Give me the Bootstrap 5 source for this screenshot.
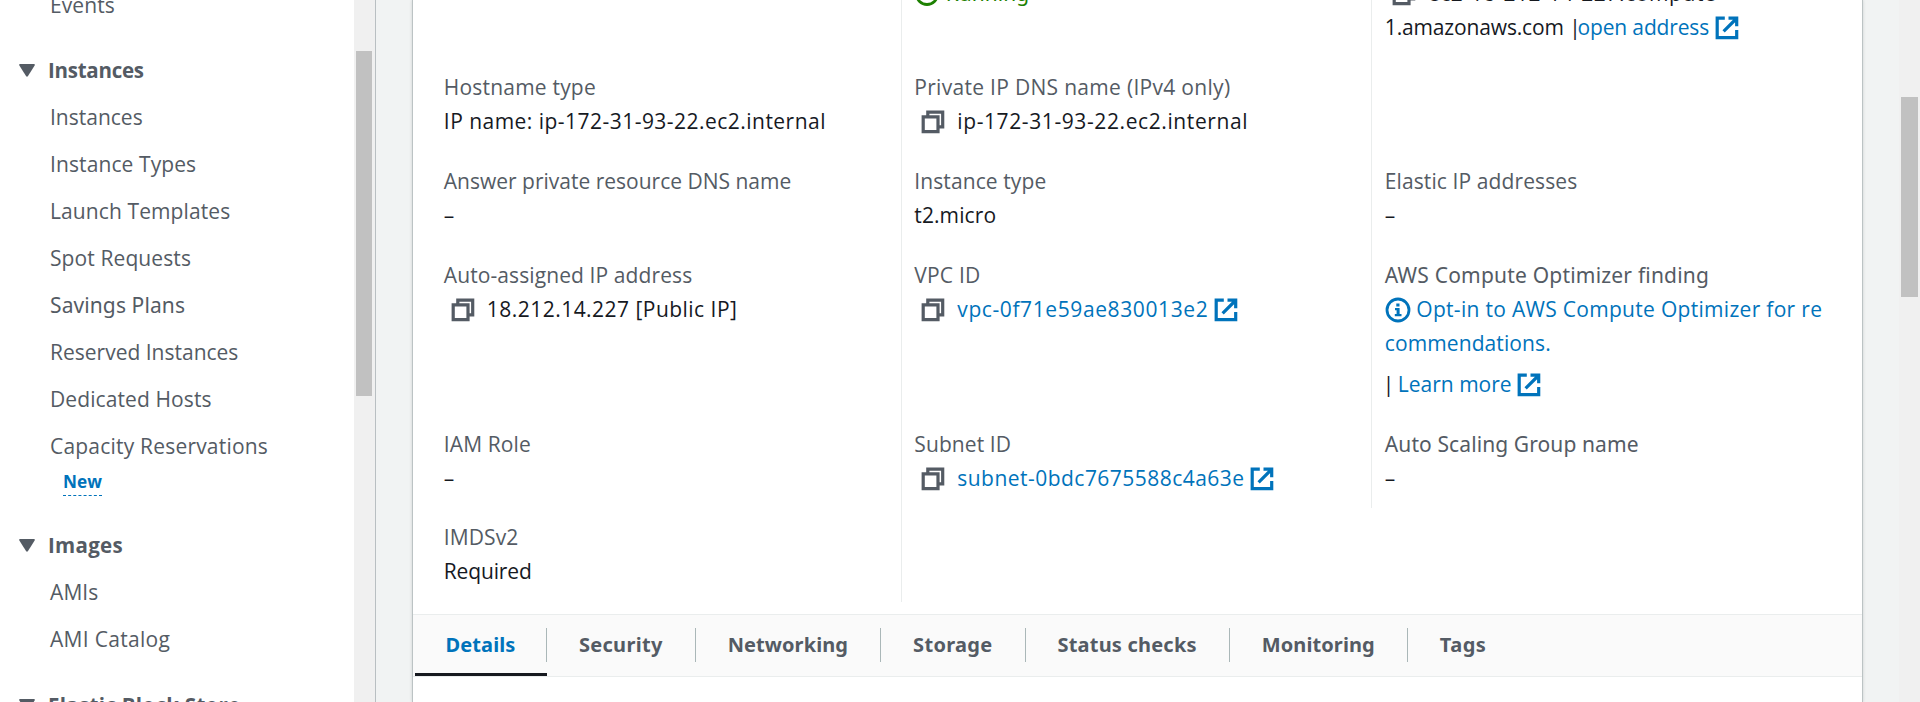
<!DOCTYPE html>
<html lang="en">
<head>
<meta charset="utf-8">
<title>Instance summary</title>
<link href="https://cdn.jsdelivr.net/npm/bootstrap@5.3.0/dist/css/bootstrap.min.css" rel="stylesheet">
<style>
  body { font: 21px/34px "Open Sans", sans-serif; letter-spacing: .1px; color: #16191f; background: #f1f3f3; }
  a, a:hover { color: #0073bb; text-decoration: none; }
  svg { fill: none; }
  .noto { font-family: "Noto Sans", sans-serif; }
  .ls-n2 { letter-spacing: -.15px; }
  .ls-0 { letter-spacing: 0; }
  .ls-2 { letter-spacing: .2px; }
  .ls-3 { letter-spacing: .3px; }
  .ls-5 { letter-spacing: .47px; }
  .ls-6 { letter-spacing: .6px; }

  /* Side navigation */
  .side-nav { width: 354px; padding-left: 50px; }
  .side-nav .nav-link { padding: 0; line-height: 47px; color: #545b64; white-space: nowrap; }
  .side-nav .group { margin-top: 18.5px; }
  .side-nav .first { margin-top: -18.5px; }
  .side-nav .heading { margin-left: -31px; font-size: 20.5px; font-weight: 700; line-height: 47px; color: #545b64; letter-spacing: -.25px; white-space: nowrap; }
  .side-nav .heading.spaced { letter-spacing: .3px; }
  .heading svg { width: 16px; height: 13px; margin-right: 13px; fill: #545b64; }
  .new-row { height: 40px; margin-top: -7px; line-height: 35px; padding-left: 13px; }
  .new-row a { font-size: 17.2px; font-weight: 700; padding-bottom: 2px; border-bottom: 1px dashed #0073bb; }
  .after-images { margin-top: .5px; }
  .rail { background: #f0f0f0; }
  .rail div { background: #c1c1c1; }
  .rail-side { width: 22px; padding: 51px 3px 0 2px; border-right: 1px solid #b9bfc2; }
  .rail-side div { height: 345px; }
  .rail-page { width: 21px; padding: 97px 2px 0; }
  .rail-page div { height: 200px; }

  /* Instance summary */
  .panel { margin: 0 36px; background: #fff; border: solid #bcc3c4; border-width: 0 1px; box-shadow: 0 0 3px rgba(0, 28, 36, .15); }
  .summary { display: grid; grid-template-columns: repeat(3, 470.5px); grid-template-rows: 82px 93.5px 94px 169px 93.5px 94px; margin: -24px 0 0 17px; height: 638px; align-content: start; }
  .field { padding: 12px 0 0 12.8px; border-left: 1px solid #eaeded; white-space: nowrap; }
  .field:nth-child(3n+1), .blank { border-color: transparent; }
  .top-row { padding-top: 0; }
  .caption { color: #545b64; }
  .ic { width: 24px; height: 24px; vertical-align: -5px; stroke-width: 3.2; }
  .ic-copy { stroke: #545b64; margin: 0 12px 0 7px; }
  .ic-ext { stroke: #0073bb; margin-left: 5.5px; }
  .ic-round { width: 26px; height: 26px; vertical-align: -6px; margin-right: 5.5px; }
  .bar { margin-right: -3px; }
  .lead-bar { margin: 0 -2px 0 -2px; }
  .running { color: #1d8102; }

  /* Tabs */
  .tab-bar { height: 63px; background: #fafafa; border: solid #eaeded; border-width: 1px 0; padding-left: 2px; }
  .tab-bar .nav-item { padding: 13px 0; }
  .tab-bar .nav-link { padding: 0 32px; font: 700 20px/34px "Noto Sans", sans-serif; color: #545b64; border-right: 1px solid #aab7b8; }
  .tab-bar .nav-item:last-child .nav-link { border: 0; }
  .tab-bar .current { border-bottom: 3px solid #16191f; }
  .tab-bar .current .nav-link { color: #0073bb; padding: 0 30.5px; }
</style>
</head>
<body class="vh-100 overflow-hidden">
<svg class="d-none">
  <symbol id="copy" viewBox="0 0 24 24"><path d="M2.2 6.9H17V21.6H2.2ZM6.8 6.9V2.2H21.7V16.9H17"/></symbol>
  <symbol id="ext" viewBox="0 0 24 24"><path d="M9.8 2.2H2.2V21.6H21.7V14M13.5 2.2H21.7V10.2M8.6 15.4 21 3"/></symbol>
  <symbol id="caret" viewBox="0 0 16 13"><path d="M1 0H15Q16.400 .2 15.500 1.700L9 12Q8 13.400 7 12L.5 1.700Q-.4 .2 1 0Z"/></symbol>
</svg>
<div class="d-flex vh-100">
  <aside class="side-nav bg-white flex-shrink-0">
    <nav class="nav flex-column flex-nowrap">
      <a class="nav-link first" href="#">Events</a>
      <div class="heading group d-flex align-items-center"><svg><use href="#caret"/></svg>Instances</div>
      <a class="nav-link ls-0" href="#">Instances</a>
      <a class="nav-link" href="#">Instance Types</a>
      <a class="nav-link" href="#">Launch Templates</a>
      <a class="nav-link" href="#">Spot Requests</a>
      <a class="nav-link noto" href="#">Savings Plans</a>
      <a class="nav-link ls-0" href="#">Reserved Instances</a>
      <a class="nav-link" href="#">Dedicated Hosts</a>
      <a class="nav-link ls-2" href="#">Capacity Reservations</a>
      <div class="new-row"><a href="#">New</a></div>
      <div class="heading spaced group d-flex align-items-center"><svg><use href="#caret"/></svg>Images</div>
      <a class="nav-link after-images" href="#">AMIs</a>
      <a class="nav-link ls-3" href="#">AMI Catalog</a>
      <div class="heading spaced group d-flex align-items-center"><svg><use href="#caret"/></svg>Elastic Block Store</div>
    </nav>
  </aside>
  <div class="rail rail-side flex-shrink-0"><div></div></div>

  <main class="panel flex-grow-1">
    <section class="summary">
      <div class="field top-row"></div>
      <div class="field top-row running"><svg class="ic-round" viewBox="0 0 26 26" stroke="#1d8102" stroke-width="2.8"><circle cx="13" cy="13" r="10.500"/><path d="m8 13 4 4 6-7"/></svg><span class="noto ls-0">Running</span></div>
      <div class="field top-row"><svg class="ic ic-copy"><use href="#copy"/></svg><span class="ls-6">ec2-18-212-14-227.compute-</span><br><span class="ls-n2">1.amazonaws.com <span class="bar">|</span><a href="#">open address</a></span><svg class="ic ic-ext"><use href="#ext"/></svg></div>

      <div class="field"><div class="caption ls-2">Hostname type</div><div class="ls-5">IP name: ip-172-31-93-22.ec2.internal</div></div>
      <div class="field"><div class="caption ls-3">Private IP DNS name (IPv4 only)</div><div class="ls-6"><svg class="ic ic-copy"><use href="#copy"/></svg>ip-172-31-93-22.ec2.internal</div></div>
      <div class="field"></div>

      <div class="field"><div class="caption ls-0">Answer private resource DNS name</div><div>–</div></div>
      <div class="field"><div class="caption">Instance type</div><div>t2.micro</div></div>
      <div class="field"><div class="caption">Elastic IP addresses</div><div>–</div></div>

      <div class="field"><div class="caption">Auto-assigned IP address</div><div class="ls-5"><svg class="ic ic-copy"><use href="#copy"/></svg>18.212.14.227 [Public IP]</div></div>
      <div class="field"><div class="caption ls-2">VPC ID</div><div class="ls-6"><svg class="ic ic-copy"><use href="#copy"/></svg><a href="#">vpc-0f71e59ae830013e2</a><svg class="ic ic-ext"><use href="#ext"/></svg></div></div>
      <div class="field"><div class="caption noto ls-2">AWS Compute Optimizer finding</div><div><a href="#"><svg class="ic-round" viewBox="0 0 26 26"><circle cx="13" cy="13" r="11" stroke="#0073bb" stroke-width="2.8"/><path fill="#0073bb" d="M11.300 6.500h3.200v3h-3.200zM10 11h4.600v6H16.500v2.200H9.800V17h1.800v-3.800H10z"/></svg><span class="ls-3">Opt-in to AWS Compute Optimizer for re</span><br>commendations.</a></div><div class="ls-0" style="margin-top: 7px"><span class="lead-bar">|</span> <a href="#">Learn more</a><svg class="ic ic-ext"><use href="#ext"/></svg></div></div>

      <div class="field"><div class="caption">IAM Role</div><div>–</div></div>
      <div class="field"><div class="caption">Subnet ID</div><div class="ls-5"><svg class="ic ic-copy"><use href="#copy"/></svg><a href="#">subnet-0bdc7675588c4a63e</a><svg class="ic ic-ext"><use href="#ext"/></svg></div></div>
      <div class="field"><div class="caption noto">Auto Scaling Group name</div><div>–</div></div>

      <div class="field"><div class="caption">IMDSv2</div><div class="ls-n2">Required</div></div>
      <div class="field"></div>
      <div class="field blank"></div>
    </section>
    <ul class="nav tab-bar flex-nowrap">
      <li class="nav-item current"><a class="nav-link" href="#">Details</a></li>
      <li class="nav-item"><a class="nav-link ls-3" href="#">Security</a></li>
      <li class="nav-item"><a class="nav-link" href="#">Networking</a></li>
      <li class="nav-item"><a class="nav-link ls-3" href="#">Storage</a></li>
      <li class="nav-item"><a class="nav-link ls-2" href="#">Status checks</a></li>
      <li class="nav-item"><a class="nav-link" href="#">Monitoring</a></li>
      <li class="nav-item"><a class="nav-link ls-5" href="#">Tags</a></li>
    </ul>
  </main>
  <div class="rail rail-page flex-shrink-0"><div></div></div>
</div>
<script src="https://cdn.jsdelivr.net/npm/bootstrap@5.3.0/dist/js/bootstrap.bundle.min.js"></script>
</body>
</html>
